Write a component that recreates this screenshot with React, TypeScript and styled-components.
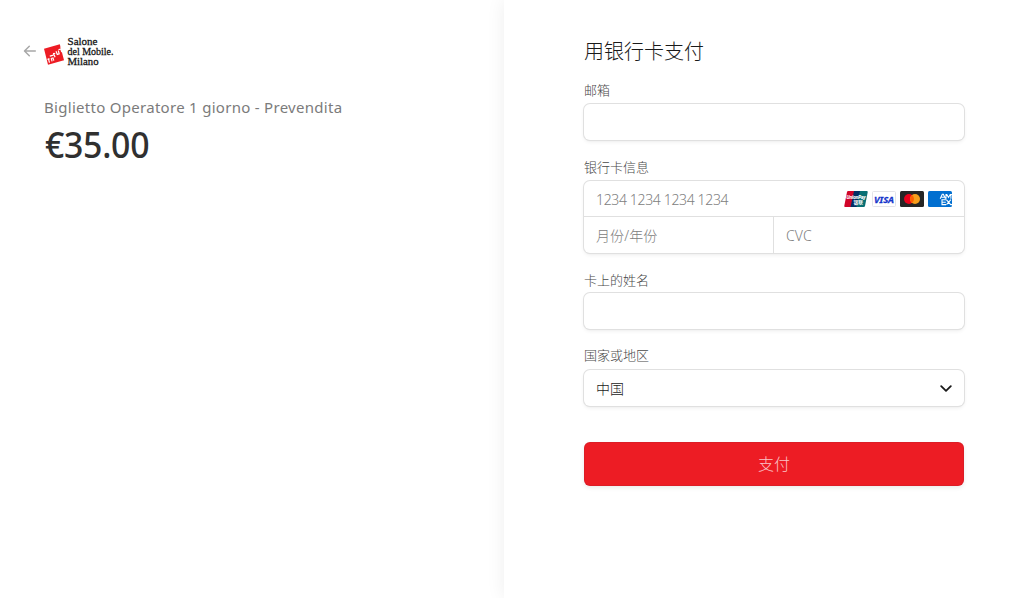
import * as React from "react";
import {useState} from "react";
import styled, {createGlobalStyle} from "styled-components";

const GlobalStyle = createGlobalStyle`
    * {
        box-sizing: border-box;
    }

    body {
        margin: 0;
        background: #fff;
        color: #303030;
        font-family: "Noto Sans", "Noto Sans CJK SC", sans-serif;
        overflow: hidden;
    }
`;

const Page = styled.div`
    display: flex;
    height: 100vh;
`;

const Overview = styled.section`
    flex: 0 0 504px;
    padding: 36px 0 0 23px;
`;

const Payment = styled.section`
    flex: 1;
    padding: 39px 0 0 80px;
    box-shadow: 0 0 18px rgba(0, 0, 0, 0.07);
    clip-path: inset(0 0 0 -20px);
`;

const Brand = styled.header`
    display: flex;
    align-items: center;
    height: 30px;
    gap: 7px;
`;

const Summary = styled.div`
    padding: 29px 0 0 21px;
`;

const ProductName = styled.h1`
    margin: 0;
    height: 25px;
    line-height: 24px;
    font-size: 15px;
    font-weight: 400;
    letter-spacing: 0.29px;
    color: #7b7b7b;
    white-space: nowrap;
`;

const Price = styled.div`
    height: 50px;
    padding-left: 1px;
    line-height: 50px;
    font-size: 36px;
    font-weight: 500;
    letter-spacing: -0.3px;
    transform: scaleX(0.94);
    transform-origin: 0 0;
    color: #303030;
`;

const Form = styled.form`
    display: flex;
    flex-direction: column;
    width: 380px;
`;

const Title = styled.h2`
    margin: 0 0 16px;
    height: 26px;
    line-height: 26px;
    font-size: 20px;
    font-weight: 300;
    color: #1a1a1a;
`;

const Field = styled.div<{$after: number}>`
    display: flex;
    flex-direction: column;
    gap: 5px;
    margin-bottom: ${({$after}) => $after}px;
`;

const Label = styled.label<{$line?: number}>`
    height: 18px;
    line-height: ${({$line}) => $line ?? 18}px;
    font-size: 13px;
    font-weight: 300;
    color: #484848;
`;

const Control = styled.div`
    display: flex;
    flex-direction: column;
    border-radius: 6px;
    background: #fff;
    box-shadow: 0 0 0 1px #e0e0e0, 0 2px 4px rgba(0, 0, 0, 0.07), 0 1px 1.5px rgba(0, 0, 0, 0.05);
`;

const Row = styled.div<{$height?: number; $line?: boolean}>`
    display: flex;
    align-items: center;
    height: ${({$height}) => $height ?? 36}px;
    border-top: ${({$line}) => ($line ? "1px solid #e0e0e0" : "none")};
`;

const Input = styled.input<{$width?: number; $line?: boolean}>`
    flex: ${({$width}) => ($width ? `0 0 ${$width}px` : "1")};
    min-width: 0;
    height: 100%;
    padding: 1px 12px 0;
    border: 0;
    border-left: ${({$line}) => ($line ? "1px solid #e0e0e0" : "none")};
    background: transparent;
    outline: none;
    font-family: inherit;
    font-size: 14px;
    font-weight: 300;
    letter-spacing: -0.35px;
    color: #303030;

    &::placeholder {
        color: #808080;
        opacity: 1;
    }
`;

const ShortInput = styled(Input)`
    padding-bottom: 1px;
    letter-spacing: 0.1px;
`;

const CardBrands = styled.div`
    display: flex;
    gap: 4px;
    padding: 1px 12px 0 0;

    svg {
        display: block;
    }
`;

const Country = styled.button`
    display: flex;
    align-items: center;
    justify-content: space-between;
    height: 36px;
    padding: 0 12px;
    border: 0;
    background: transparent;
    font-family: inherit;
    font-size: 14px;
    font-weight: 300;
    color: #1a1a1a;
`;

const PayButton = styled.button`
    height: 44px;
    margin: 0;
    padding: 0 0 2px;
    border: 0;
    border-radius: 6px;
    background: #ed1c24;
    box-shadow: inset 0 0 0 1px rgba(80, 40, 60, 0.1), 0 2px 4px rgba(0, 0, 0, 0.08);
    font-family: inherit;
    font-size: 16px;
    font-weight: 300;
    color: rgba(255, 255, 255, 0.75);
`;

const BackIcon = () => (
    <svg width="14" height="14" viewBox="0 0 14 14" fill="none" stroke="#a8a8a8" strokeWidth="1.5" strokeLinecap="round" strokeLinejoin="round">
        <path d="M12.3 7H1.8M6.3 2.2 1.500 7l4.800 4.800" />
    </svg>
);

const SaloneLogo = () => (
    <svg width="74" height="36" viewBox="0 -3 74 36">
        <path d="M0 12.800 15.800 8.300 20 24.200 4 28.800Z" fill="#ed1c24" />
        <g stroke="#fff" strokeWidth="1.200" fill="none">
            <path d="M4.300 22.300l1.200 4.300M7.200 22.200l.9 3.200M7 22.500l2-.6.8 2.700M3.500 23.400l2.100-.5" />
            <path d="M5.800 20.100l3.600-1M9.400 17l1.700 4.200M9 18.300l2.200-1" />
            <path d="M12 15.200l1.300 3.300 1.900-.7-.9-3.200M14.500 13.800l2.300-.8 1 3.100M17 10.600l.9 4" />
        </g>
        <g fill="#161616" fontFamily="Liberation Serif, serif" fontSize="11" stroke="#161616" strokeWidth="0.300">
            <text x="23.500" y="9" textLength="30" lengthAdjust="spacingAndGlyphs">Salone</text>
            <text x="23.500" y="19" textLength="46" lengthAdjust="spacingAndGlyphs">del Mobile.</text>
            <text x="23.500" y="29" textLength="31" lengthAdjust="spacingAndGlyphs">Milano</text>
        </g>
    </svg>
);

const UnionPayIcon = () => (
    <svg width="24" height="16" viewBox="0 0 24 16">
        <path d="M4.200 0H12L8.500 16H1.200Q0 16 .3 14.700L3 1Q3.200 0 4.200 0Z" fill="#d10429" />
        <path d="M10 0h8l-3.500 16H6.500Z" fill="#022e64" />
        <path d="M16 0h6.600Q24 0 23.700 1.300L21 15q-.2 1-1.300 1H12.500Z" fill="#076f74" />
        <g fill="#fff" fontWeight="700">
            <text x="2.600" y="8" fontFamily="Liberation Sans, sans-serif" fontSize="6" fontStyle="italic" textLength="19" lengthAdjust="spacingAndGlyphs" stroke="#fff" strokeWidth="0.200">UnionPay</text>
            <text x="9.500" y="13.400" fontFamily="Noto Sans CJK SC, sans-serif" fontSize="5" textLength="9.500" lengthAdjust="spacingAndGlyphs">银联</text>
        </g>
    </svg>
);

const VisaIcon = () => (
    <svg width="24" height="16" viewBox="0 0 24 16">
        <rect x="0.500" y="0.500" width="23" height="15" rx="1" fill="#fff" stroke="#e3e3e8" />
        <text x="2" y="11.500" fill="#1434cb" fontFamily="Noto Sans, sans-serif" fontSize="9.500" fontWeight="700" fontStyle="italic" textLength="20" lengthAdjust="spacingAndGlyphs" stroke="#1434cb" strokeWidth="0.300">VISA</text>
    </svg>
);

const MastercardIcon = () => (
    <svg width="24" height="16" viewBox="0 0 24 16">
        <rect width="24" height="16" rx="1.500" fill="#252525" />
        <circle cx="9" cy="8" r="5" fill="#eb001b" />
        <circle cx="15" cy="8" r="5" fill="#f79e1b" />
        <path d="M12 4a5 5 0 0 1 0 8 5 5 0 0 1 0-8Z" fill="#ff5f00" />
    </svg>
);

const AmexIcon = () => (
    <svg width="24" height="16" viewBox="0 0 24 16">
        <rect width="24" height="16" rx="1.500" fill="#016fd0" />
        <g fill="none" stroke="#fff" strokeWidth="1.100">
            <path d="M12.200 7.800 14.300 3.200h1l2.200 4.600M13.500 6.300h2.700M18 7.800V3.500h.8l1.700 3 1.700-3H24M22.900 3.200v4.600" />
            <path d="M18 8.800H14v4.800h4M14 11.200h3.800M18.300 8.700l4.400 4.900M22.900 8.700l-4.400 4.900M22.500 13.600H24" />
        </g>
    </svg>
);

const ChevronIcon = () => (
    <svg width="12" height="12" viewBox="0 0 12 12" fill="none" stroke="#1a1a1a" strokeWidth="1.800" strokeLinecap="round" strokeLinejoin="round">
        <path d="M1.200 4.200 6 8.900l4.800-4.700" />
    </svg>
);

const App: React.FC = () => {
    const [email, setEmail] = useState("");
    const [holder, setHolder] = useState("");

    return (
        <>
            <GlobalStyle />
            <Page>
                <Overview>
                    <Brand>
                        <BackIcon />
                        <SaloneLogo />
                    </Brand>
                    <Summary>
                        <ProductName>Biglietto Operatore 1 giorno - Prevendita</ProductName>
                        <Price>€35.00</Price>
                    </Summary>
                </Overview>
                <Payment>
                    <Form onSubmit={(e) => e.preventDefault()}>
                        <Title>用银行卡支付</Title>
                        <Field $after={18}>
                            <Label htmlFor="email">邮箱</Label>
                            <Control>
                                <Row>
                                    <Input id="email" value={email} onChange={(e) => setEmail(e.target.value)} />
                                </Row>
                            </Control>
                        </Field>
                        <Field $after={17}>
                            <Label htmlFor="card">银行卡信息</Label>
                            <Control>
                                <Row $height={35}>
                                    <Input id="card" placeholder="1234 1234 1234 1234" />
                                    <CardBrands>
                                        <UnionPayIcon />
                                        <VisaIcon />
                                        <MastercardIcon />
                                        <AmexIcon />
                                    </CardBrands>
                                </Row>
                                <Row $height={37} $line>
                                    <ShortInput $width={189} placeholder="月份/年份" />
                                    <ShortInput $line placeholder="CVC" />
                                </Row>
                            </Control>
                        </Field>
                        <Field $after={18}>
                            <Label htmlFor="holder" $line={20}>卡上的姓名</Label>
                            <Control>
                                <Row>
                                    <Input id="holder" value={holder} onChange={(e) => setHolder(e.target.value)} />
                                </Row>
                            </Control>
                        </Field>
                        <Field $after={36}>
                            <Label htmlFor="country" $line={17}>国家或地区</Label>
                            <Control>
                                <Country id="country" type="button">
                                    中国
                                    <ChevronIcon />
                                </Country>
                            </Control>
                        </Field>
                        <PayButton type="submit">支付</PayButton>
                    </Form>
                </Payment>
            </Page>
        </>
    );
};

export default App;
